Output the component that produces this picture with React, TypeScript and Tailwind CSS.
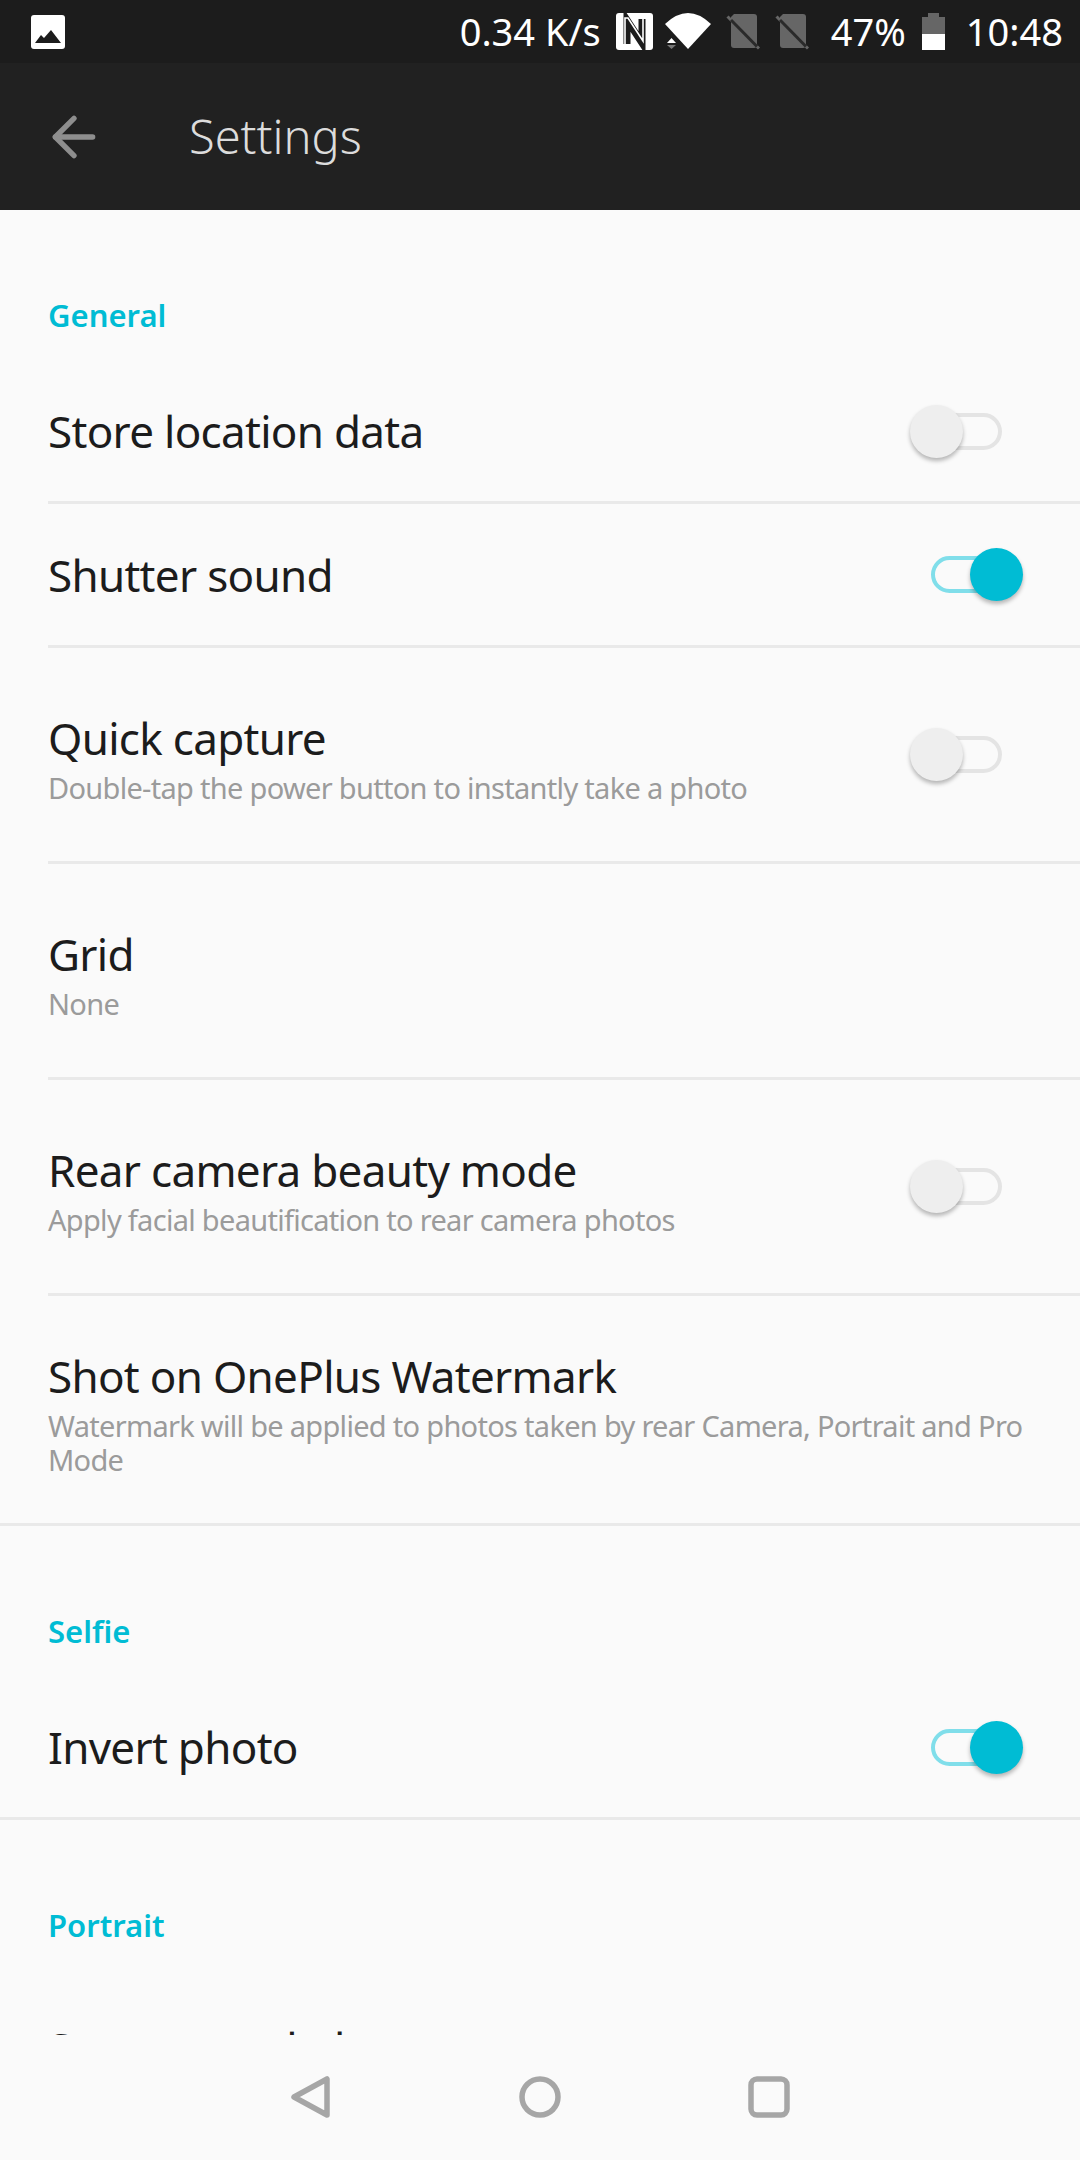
import { ArrowLeft } from 'lucide-react';

const font = { fontFamily: '"Noto Sans", "Open Sans", sans-serif' };

function Toggle({ on }: { on?: boolean }) {
    return (
        <div className={`relative w-[71px] h-[37px] rounded-full border-[4px] mr-[78px] shrink-0 ${on ? 'border-[#80deea]' : 'border-[#e4e4e4]'}`}>
            <div
                className={`absolute top-[-12px] w-[53px] h-[53px] rounded-full shadow-[0_3px_4px_rgba(0,0,0,0.28)] ${on ? 'left-[35px] bg-[#00bcd4]' : 'left-[-25px] bg-[#eeeeee]'}`}
            />
        </div>
    );
}

function SectionLabel({ children }: { children: string }) {
    return <div className="h-[151px] pl-[48px] pt-[84px] text-[31px] leading-[42px] font-semibold text-[#00bcd4]">{children}</div>;
}

function Row({ title, sub, toggle, heightClass, full }: { title: string; sub?: string; toggle?: 'on' | 'off'; heightClass: string; full?: boolean }) {
    return (
        <div className={full ? '' : 'pl-[48px]'}>
            <div className={`flex items-center justify-between ${full ? 'pl-[48px]' : ''} ${heightClass}`}>
                <div className={`${sub ? 'pt-[6px]' : ''} ${toggle ? '' : 'pr-[40px]'}`}>
                    <div className="text-[44px] leading-[54px] tracking-[-0.7px] text-[#1c1c1c]">{title}</div>
                    {sub && <div className="mt-[6px] text-[29px] leading-[34px] tracking-[-0.7px] text-[#9b9b9b]">{sub}</div>}
                </div>
                {toggle && <Toggle on={toggle === 'on'} />}
            </div>
            <div className="h-[3px] bg-[#e9e9e9]" />
        </div>
    );
}

function SimOff() {
    return (
        <svg width="34" height="37" viewBox="0 0 34 37">
            <path d="M5 4L8 1h20a3 3 0 0 1 3 3v28a3 3 0 0 1-3 3H8a3 3 0 0 1-3-3z" fill="#666666" />
            <path d="M1.5 3.5L33 35.5" stroke="#666666" strokeWidth="3" />
            <path d="M5 7L31 33.5" stroke="#2a2a2a" strokeWidth="3" />
        </svg>
    );
}

export default function App() {
    return (
        <div className="w-[1080px] h-[2160px] flex flex-col overflow-hidden bg-[#fafafa]" style={font}>
            {/* status bar */}
            <div className="h-[63px] shrink-0 bg-[#1c1c1c] flex items-center pl-[31px] pr-[17px] text-white text-[38px]">
                <svg width="34" height="34" viewBox="0 0 34 34">
                    <rect width="34" height="34" rx="3" fill="#fff" />
                    <path d="M4 28l6-8 3 3 7-8 10 13z" fill="#1c1c1c" />
                </svg>
                <div className="ml-auto flex items-center">
                    <span className="mr-[15px]">0.34 K/s</span>
                    <svg width="37" height="37" viewBox="0 0 37 37" className="mr-[12px]">
                        <rect width="37" height="37" rx="3" fill="#fff" />
                        <path d="M11 31V7L26 30V6" fill="none" stroke="#1c1c1c" strokeWidth="7" />
                        <path d="M9 34V5H12L27 28V3" fill="none" stroke="#fff" strokeWidth="1.6" />
                    </svg>
                    <svg width="46" height="37" viewBox="0 0 46 37" className="mr-[15px]">
                        <path d="M0 11Q23-11 46 11L23 36z" fill="#fff" />
                        <path d="M2 30h9l-4.5-5z" fill="#fff" />
                        <path d="M2 32h9l-4.5 4z" fill="#777777" />
                    </svg>
                    <SimOff />
                    <div className="w-[15px]" />
                    <SimOff />
                    <span className="ml-[22px] mr-[16px]">47%</span>
                    <svg width="23" height="37" viewBox="0 0 23 37" className="mr-[21px]">
                        <path d="M6 0h11v4h6v33H0V4h6z" fill="#666666" />
                        <rect y="21" width="23" height="16" fill="#fff" />
                    </svg>
                    <span>10:48</span>
                </div>
            </div>
            {/* app bar */}
            <div className="h-[147px] shrink-0 bg-[#212121] flex items-center pl-[42px]">
                <ArrowLeft size={64} strokeWidth={2} className="text-[#8e8e8e]" />
                <span className="ml-[83px] -mt-[1px] text-[47px] text-[#dcdcdc] font-light">Settings</span>
            </div>
            {/* list */}
            <div className="flex-1 overflow-hidden">
                <SectionLabel>General</SectionLabel>
                <Row title="Store location data" toggle="off" heightClass="h-[140px]" />
                <Row title="Shutter sound" toggle="on" heightClass="h-[141px]" />
                <Row title="Quick capture" sub="Double-tap the power button to instantly take a photo" toggle="off" heightClass="h-[213px]" />
                <Row title="Grid" sub="None" heightClass="h-[213px]" />
                <Row title="Rear camera beauty mode" sub="Apply facial beautification to rear camera photos" toggle="off" heightClass="h-[213px]" />
                <Row title="Shot on OnePlus Watermark" sub="Watermark will be applied to photos taken by rear Camera, Portrait and Pro Mode" heightClass="h-[227px]" full />
                <SectionLabel>Selfie</SectionLabel>
                <Row title="Invert photo" toggle="on" heightClass="h-[140px]" full />
                <SectionLabel>Portrait</SectionLabel>
                <Row title="Save normal photo" heightClass="h-[153px]" />
            </div>
            {/* nav bar */}
            <div className="h-[125px] shrink-0 bg-[#fafafa] flex items-start pl-[290px] pt-[41px] gap-[187px]">
                <svg width="42" height="42" viewBox="0 0 42 42" fill="none" stroke="#a6a6a6" strokeWidth="5.5" strokeLinejoin="round">
                    <path d="M37 3v36L4 21z" />
                </svg>
                <svg width="42" height="42" viewBox="0 0 42 42" fill="none" stroke="#a6a6a6" strokeWidth="5.5">
                    <circle cx="21" cy="21" r="18" />
                </svg>
                <svg width="42" height="42" viewBox="0 0 42 42" fill="none" stroke="#a6a6a6" strokeWidth="5.5">
                    <rect x="3" y="3" width="36" height="36" rx="6" />
                </svg>
            </div>
        </div>
    );
}
